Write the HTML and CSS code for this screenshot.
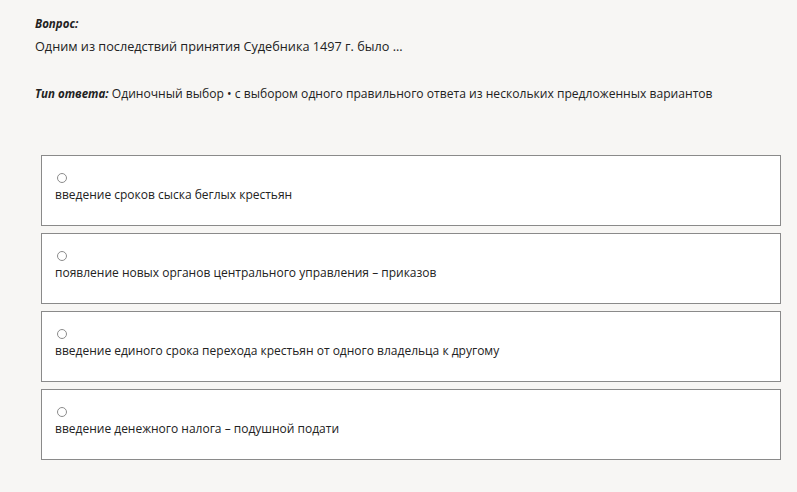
FILE: index.html
```html
<!DOCTYPE html>
<html lang="ru">
<head>
    <meta charset="UTF-8">
    <meta name="viewport" content="width=device-width, initial-scale=1.0">
    <title>Вопрос</title>
    <link rel="stylesheet" href="styles.css">
</head>
<body>
    <div class="question">
        <div class="label">Вопрос:</div>
        <div class="question-text">Одним из последствий принятия Судебника 1497 г. было ...</div>
    </div>

    <div class="answer-type">
        <span class="label">Тип ответа:</span> Одиночный выбор • с выбором одного правильного ответа из нескольких предложенных вариантов
    </div>

    <div class="options">
        <label class="option">
            <input type="radio" name="answer">
            <span class="option-text">введение сроков сыска беглых крестьян</span>
        </label>
        <label class="option">
            <input type="radio" name="answer">
            <span class="option-text">появление новых органов центрального управления – приказов</span>
        </label>
        <label class="option">
            <input type="radio" name="answer">
            <span class="option-text">введение единого срока перехода крестьян от одного владельца к другому</span>
        </label>
        <label class="option">
            <input type="radio" name="answer">
            <span class="option-text">введение денежного налога – подушной подати</span>
        </label>
    </div>
</body>
</html>
```

FILE: styles.css
```css
* {
    margin: 0;
    padding: 0;
    box-sizing: border-box;
}

body {
    background-color: #f7f6f4;
    color: #222;
    font-family: 'Open Sans', 'Noto Sans', sans-serif;
    font-size: 12px;
    line-height: 18px;
    padding: 15px 16px 0 35px;
}

.label {
    font-weight: 700;
    font-style: italic;
    font-size: 11.5px;
}

.question-text {
    margin-top: 4px;
    font-size: 12.7px;
}

.answer-type {
    margin-top: 30px;
    font-size: 12.1px;
}

.options {
    margin-top: 52px;
    margin-left: 6px;
    display: flex;
    flex-direction: column;
    gap: 7px;
}

.option {
    display: flex;
    flex-direction: column;
    align-items: flex-start;
    height: 71px;
    padding: 17px 13px 0;
    background-color: #fff;
    border: 1px solid #8a8a8a;
    cursor: pointer;
}

.option input {
    appearance: none;
    -webkit-appearance: none;
    width: 10px;
    height: 10px;
    margin-left: 2px;
    border: 1px solid #8c8c8c;
    border-radius: 50%;
    background-color: #fff;
}

.option input:checked {
    background-color: #1a73e8;
    box-shadow: inset 0 0 0 2px #fff;
}

.option-text {
    margin-top: 3px;
}
```
